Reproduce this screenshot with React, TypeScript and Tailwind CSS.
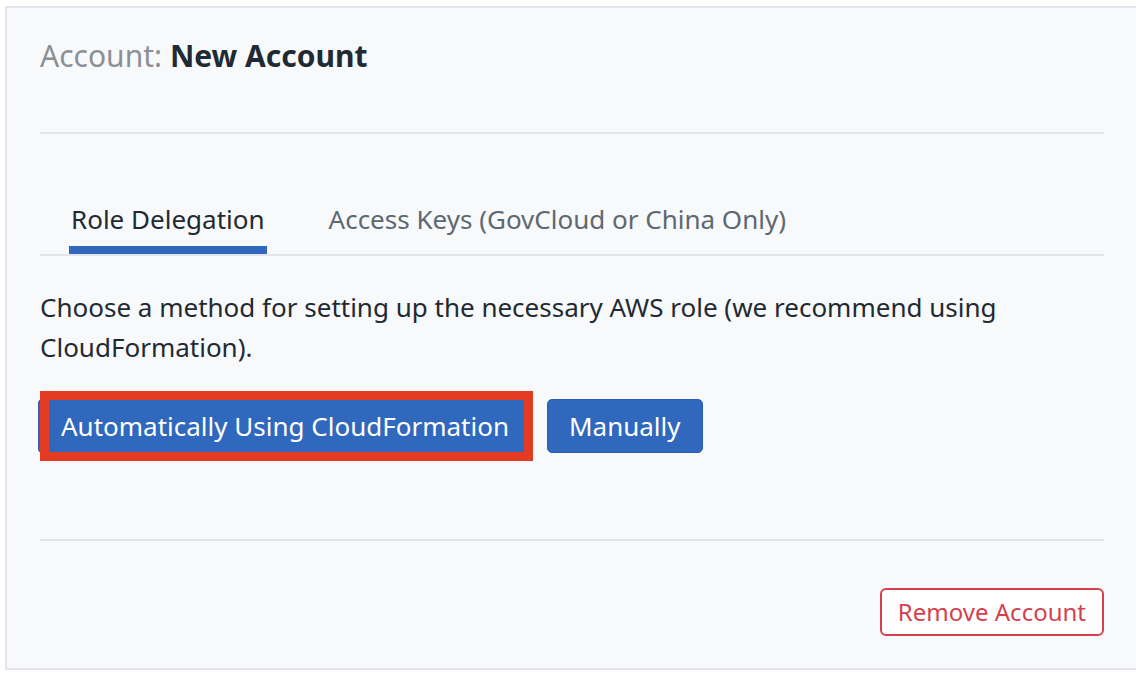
import React from "react";

export default function App() {
  const [tab, setTab] = React.useState("role");

  const tabs = [
    { id: "role", label: "Role Delegation" },
    { id: "keys", label: "Access Keys (GovCloud or China Only)" },
  ];

  return (
    <div
      className="h-[682px] w-[1136px] overflow-hidden bg-white pl-[5px] pt-[6px]"
      style={{ fontFamily: '"Noto Sans", "Open Sans", sans-serif' }}
    >
      <div className="flex h-[664px] w-[1134px] flex-col border-2 border-[#e3e5eb] bg-[#f8f9fb] px-[33px] pt-[27px] pb-[30px]">
        <h2 className="text-[30px] leading-[42px] text-[#8b9096]">
          Account: <span className="font-bold text-[#1f2a33]">New Account</span>
        </h2>
        <div className="mt-[55px] h-[2px] bg-[#e3e5eb]" />

        <div className="mt-[67px] flex gap-[60px] border-b-2 border-[#e3e5eb] pl-[29px]">
          {tabs.map(({ id, label }) => (
            <button
              key={id}
              onClick={() => setTab(id)}
              className={`px-[2px] pb-[9px] text-[26px] leading-[36px] ${
                tab === id
                  ? "border-b-[8px] border-[#3068be] text-[#1f2a33]"
                  : "border-b-[8px] border-transparent text-[#5e6870]"
              }`}
            >
              {label}
            </button>
          ))}
        </div>

        <p className="mt-[31px] text-[26px] leading-[40px] text-[#1f2a33]">
          Choose a method for setting up the necessary AWS role (we recommend
          using CloudFormation).
        </p>

        <div className="mt-[32px] flex items-center gap-[15px]">
          <div className="relative -ml-[2px]">
            <button className="h-[54px] rounded-[4px] border border-[#2a5db3] bg-[#3068be] px-[22px] text-[26px] text-white">
              Automatically Using CloudFormation
            </button>
            <div className="pointer-events-none absolute -top-[8px] -bottom-[8px] left-[2px] -right-[1px] border-[9px] border-[#e43c24]" />
          </div>
          <button className="h-[54px] rounded-[5px] border border-[#2a5db3] bg-[#3068be] px-[21px] text-[26px] text-white">
            Manually
          </button>
        </div>

        <div className="mt-[86px] h-[2px] bg-[#e3e5eb]" />

        <div className="mt-[47px] flex justify-end">
          <button className="h-[48px] rounded-[6px] border-2 border-[#d4404b] bg-white px-[16px] text-[24px] text-[#d4404b]">
            Remove Account
          </button>
        </div>
      </div>
    </div>
  );
}
